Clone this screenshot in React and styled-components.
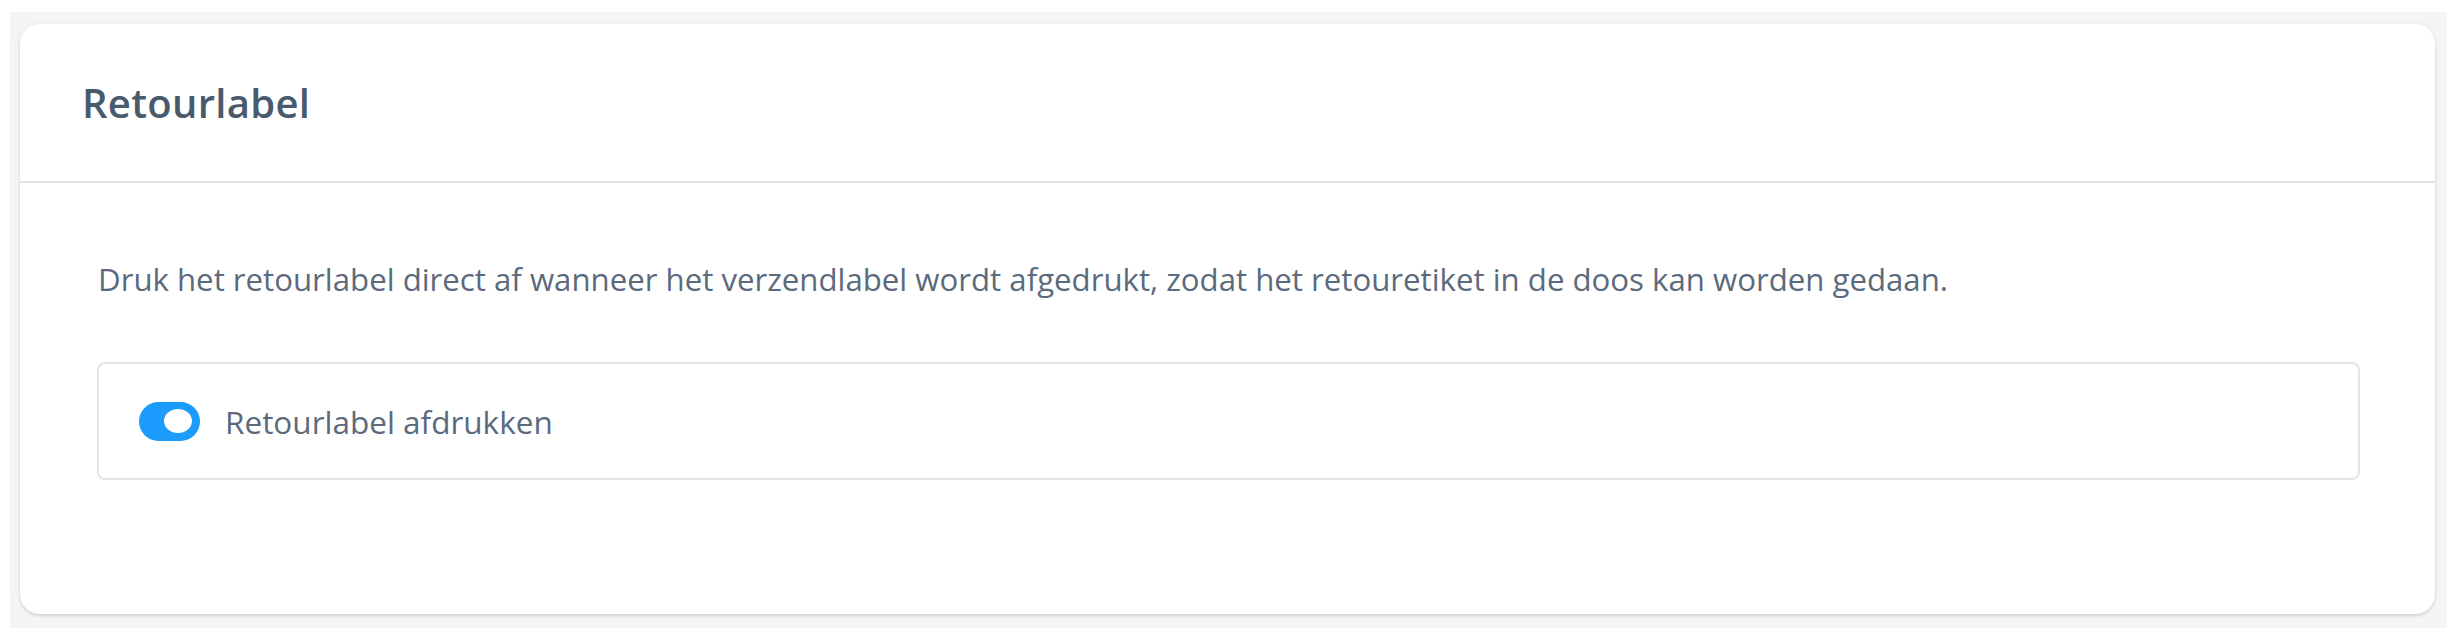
import { useState } from "react";
import styled, { createGlobalStyle } from "styled-components";

const GlobalStyle = createGlobalStyle`
  html, body { margin: 0; padding: 0; background: #ffffff; }
  body { font-family: "Open Sans", "Noto Sans", Arial, sans-serif; }
  * { box-sizing: border-box; }
`;

export default function App() {
  const [printReturn, setPrintReturn] = useState(true);

  return (
    <>
      <GlobalStyle />
      <Page>
        <Card>
          <CardHeader>
            <Title>Retourlabel</Title>
          </CardHeader>
          <CardBody>
            <Description>
              Druk het retourlabel direct af wanneer het verzendlabel wordt afgedrukt, zodat het
              retouretiket in de doos kan worden gedaan.
            </Description>
            <OptionBox>
              <Toggle
                role="switch"
                aria-checked={printReturn}
                $on={printReturn}
                onClick={() => setPrintReturn((v) => !v)}
              >
                <Knob $on={printReturn} />
              </Toggle>
              <OptionLabel>Retourlabel afdrukken</OptionLabel>
            </OptionBox>
          </CardBody>
        </Card>
      </Page>
    </>
  );
}

/* === styles === */
const Page = styled.div`
  margin: 12px 9px 11px 10px;
  padding: 12px 12px 14px 10px;
  background: #f4f5f7;
`;

const Card = styled.section`
  background: #ffffff;
  border-radius: 20px;
  box-shadow: 0 2px 3px rgba(0, 0, 0, 0.12), 0 0 6px rgba(0, 0, 0, 0.05);
  overflow: hidden;
`;

const CardHeader = styled.header`
  height: 159px;
  display: flex;
  align-items: center;
  padding: 0 62px;
  border-bottom: 2px solid #dfe4eb;
`;

const Title = styled.h2`
  margin: 0;
  font-size: 40px;
  font-weight: 600;
  color: #4a5a6d;
  letter-spacing: 0.3px;
`;

const CardBody = styled.div`
  padding: 74px 75px 134px 77px;
`;

const Description = styled.p`
  margin: 0 0 61px 1px;
  font-size: 31.2px;
  line-height: 44px;
  color: #5b6a7c;
`;

const OptionBox = styled.div`
  height: 118px;
  display: flex;
  align-items: center;
  gap: 25px;
  padding: 0 40px;
  border: 2px solid #dfe4eb;
  border-radius: 8px;
`;

const Toggle = styled.button`
  all: unset;
  position: relative;
  width: 61px;
  height: 39px;
  flex-shrink: 0;
  border-radius: 9999px;
  background: ${({ $on }) => ($on ? "#1b9bfc" : "#c6ccd4")};
  cursor: pointer;
`;

const Knob = styled.span`
  position: absolute;
  top: 50%;
  transform: translateY(-50%);
  left: ${({ $on }) => ($on ? "25px" : "8px")};
  width: 28px;
  height: 24px;
  border-radius: 50%;
  background: #ffffff;
`;

const OptionLabel = styled.span`
  font-size: 31.5px;
  color: #5b6a7c;
`;
